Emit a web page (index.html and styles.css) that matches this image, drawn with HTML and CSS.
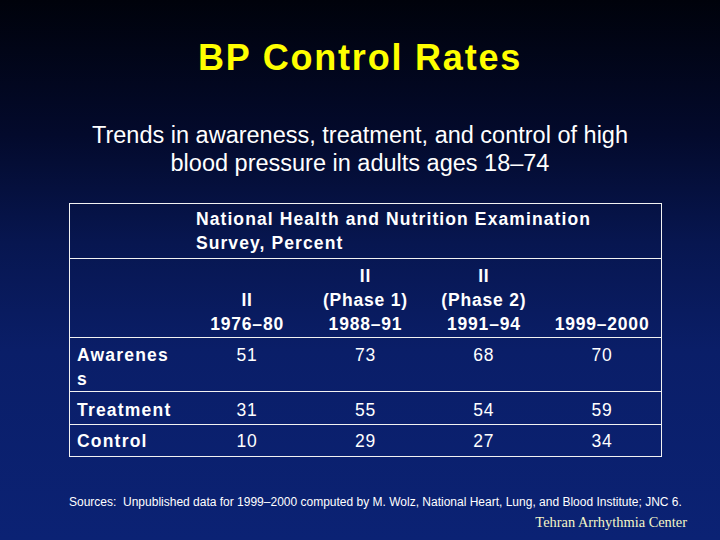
FILE: index.html
```html
<!DOCTYPE html>
<html lang="en">
<head>
<meta charset="utf-8">
<title>BP Control Rates</title>
<link rel="stylesheet" href="styles.css">
</head>
<body>
<main class="slide">
  <h1 class="title">BP Control Rates</h1>
  <p class="subtitle">Trends in awareness, treatment, and control of high<br>blood pressure in adults ages 18–74</p>
  <table class="data">
    <colgroup>
      <col><col><col><col><col>
    </colgroup>
    <thead>
      <tr class="survey-row">
        <th class="blank"></th>
        <th class="survey" colspan="4">National Health and Nutrition Examination<br>Survey, Percent</th>
      </tr>
      <tr class="cols-row">
        <th class="blank"></th>
        <th>II<br>1976–80</th>
        <th>II<br>(Phase 1)<br>1988–91</th>
        <th>II<br>(Phase 2)<br>1991–94</th>
        <th>1999–2000</th>
      </tr>
    </thead>
    <tbody>
      <tr class="row-awareness">
        <th class="label">Awarenes<br>s</th>
        <td>51</td><td>73</td><td>68</td><td>70</td>
      </tr>
      <tr class="row-treatment">
        <th class="label">Treatment</th>
        <td>31</td><td>55</td><td>54</td><td>59</td>
      </tr>
      <tr class="row-control">
        <th class="label">Control</th>
        <td>10</td><td>29</td><td>27</td><td>34</td>
      </tr>
    </tbody>
  </table>
  <p class="sources">Sources:&nbsp; Unpublished data for 1999–2000 computed by M. Wolz, National Heart, Lung, and Blood Institute; JNC 6.</p>
  <p class="credit">Tehran Arrhythmia Center</p>
</main>
</body>
</html>
```
FILE: styles.css
```css
html, body {
  margin: 0;
  padding: 0;
}
body {
  width: 720px;
  height: 540px;
  overflow: hidden;
  background: linear-gradient(to bottom, #00020b 0%, #030a2c 25%, #071650 45%, #0a1e68 65%, #0b2274 100%);
  font-family: "Liberation Sans", Arial, sans-serif;
  color: #ffffff;
}
.slide {
  display: flex;
  flex-direction: column;
  width: 720px;
  height: 540px;
}
.title {
  margin: 39px 0 0;
  text-align: center;
  font-size: 36px;
  line-height: 38px;
  font-weight: bold;
  letter-spacing: 1.8px;
  color: #ffff00;
}
.subtitle {
  margin: 44px 0 0;
  text-align: center;
  font-size: 23.5px;
  line-height: 28px;
  color: #ffffff;
}
.data {
  margin: 26px 0 0 69px;
  width: 593px;
  table-layout: fixed;
  border-collapse: collapse;
  border: 1px solid #f2f2f2;
  font-size: 17.5px;
  line-height: 24px;
  letter-spacing: 0.8px;
  color: #ffffff;
}
.data tr {
  border-bottom: 1px solid #f2f2f2;
}
.data th,
.data td {
  padding: 0 4px;
  text-align: center;
  vertical-align: top;
}
.data th {
  font-weight: bold;
}
.data td {
  font-weight: normal;
  letter-spacing: 0.8px;
}
.survey-row th {
  padding-top: 3px;
  padding-bottom: 3px;
}
.data .survey {
  text-align: left;
  padding-left: 8px;
  letter-spacing: 1.1px;
}
.cols-row th {
  vertical-align: bottom;
  padding-top: 5px;
  padding-bottom: 1px;
}
.data .label {
  text-align: left;
  padding-left: 7px;
  letter-spacing: 1.2px;
}
.row-awareness th,
.row-awareness td {
  padding-top: 5px;
  padding-bottom: 0;
}
.row-treatment th,
.row-treatment td {
  padding-top: 6px;
  padding-bottom: 2px;
}
.row-control th,
.row-control td {
  padding-top: 4px;
  padding-bottom: 3px;
}
.sources {
  margin: 38px 0 0 69px;
  font-size: 12px;
  line-height: 14px;
  color: #ffffff;
  white-space: nowrap;
}
.credit {
  margin: 5px 33px 0 0;
  text-align: right;
  font-family: "Liberation Serif", "Times New Roman", serif;
  font-size: 14.4px;
  line-height: 16px;
  color: #f4f6c8;
}
```
